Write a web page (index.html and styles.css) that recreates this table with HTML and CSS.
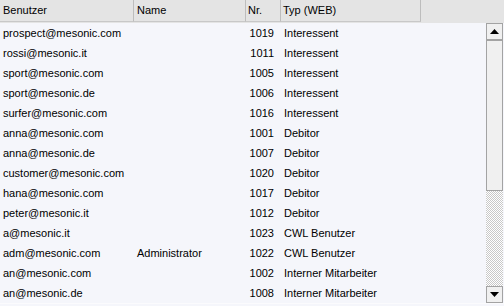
FILE: index.html
```html
<!DOCTYPE html>
<html lang="de">
<head>
    <meta charset="UTF-8">
    <title>Benutzer</title>
    <link rel="stylesheet" href="styles.css">
</head>
<body>
    <div class="grid">
        <div class="grid-head">
            <div class="head-cell col-user">Benutzer</div>
            <div class="head-cell col-name">Name</div>
            <div class="head-cell col-nr">Nr.</div>
            <div class="head-cell col-type">Typ (WEB)</div>
        </div>

        <div class="grid-body">
            <div class="rows">
                <div class="row"><span class="col-user">prospect@mesonic.com</span><span class="col-name"></span><span class="col-nr">1019</span><span class="col-type">Interessent</span></div>
                <div class="row"><span class="col-user">rossi@mesonic.it</span><span class="col-name"></span><span class="col-nr">1011</span><span class="col-type">Interessent</span></div>
                <div class="row"><span class="col-user">sport@mesonic.com</span><span class="col-name"></span><span class="col-nr">1005</span><span class="col-type">Interessent</span></div>
                <div class="row"><span class="col-user">sport@mesonic.de</span><span class="col-name"></span><span class="col-nr">1006</span><span class="col-type">Interessent</span></div>
                <div class="row"><span class="col-user">surfer@mesonic.com</span><span class="col-name"></span><span class="col-nr">1016</span><span class="col-type">Interessent</span></div>
                <div class="row"><span class="col-user">anna@mesonic.com</span><span class="col-name"></span><span class="col-nr">1001</span><span class="col-type">Debitor</span></div>
                <div class="row"><span class="col-user">anna@mesonic.de</span><span class="col-name"></span><span class="col-nr">1007</span><span class="col-type">Debitor</span></div>
                <div class="row"><span class="col-user">customer@mesonic.com</span><span class="col-name"></span><span class="col-nr">1020</span><span class="col-type">Debitor</span></div>
                <div class="row"><span class="col-user">hana@mesonic.com</span><span class="col-name"></span><span class="col-nr">1017</span><span class="col-type">Debitor</span></div>
                <div class="row"><span class="col-user">peter@mesonic.it</span><span class="col-name"></span><span class="col-nr">1012</span><span class="col-type">Debitor</span></div>
                <div class="row"><span class="col-user">a@mesonic.it</span><span class="col-name"></span><span class="col-nr">1023</span><span class="col-type">CWL Benutzer</span></div>
                <div class="row"><span class="col-user">adm@mesonic.com</span><span class="col-name">Administrator</span><span class="col-nr">1022</span><span class="col-type">CWL Benutzer</span></div>
                <div class="row"><span class="col-user">an@mesonic.com</span><span class="col-name"></span><span class="col-nr">1002</span><span class="col-type">Interner Mitarbeiter</span></div>
                <div class="row"><span class="col-user">an@mesonic.de</span><span class="col-name"></span><span class="col-nr">1008</span><span class="col-type">Interner Mitarbeiter</span></div>
            </div>

            <div class="scrollbar">
                <div class="scroll-btn">
                    <svg width="9" height="5" viewBox="0 0 9 5"><path d="M0 5 L4.5 0 L9 5 Z" fill="#000"/></svg>
                </div>
                <div class="scroll-thumb"></div>
                <div class="scroll-track"></div>
                <div class="scroll-btn">
                    <svg width="9" height="5" viewBox="0 0 9 5"><path d="M0 0 L9 0 L4.5 5 Z" fill="#000"/></svg>
                </div>
            </div>
        </div>
    </div>
</body>
</html>
```

FILE: styles.css
```css
* {
    margin: 0;
    padding: 0;
    box-sizing: border-box;
}

body {
    font-family: "Liberation Sans", Arial, sans-serif;
    font-size: 11px;
    color: #000;
    background: #f5f6fb;
    width: 504px;
    height: 306px;
    overflow: hidden;
}

.grid {
    display: flex;
    flex-direction: column;
    height: 306px;
}

.grid-head {
    display: flex;
    height: 23px;
    background: #e4e4e4;
    flex-shrink: 0;
}

.head-cell {
    height: 22px;
    line-height: 21px;
    border-right: 1px solid #bdbdbd;
    border-bottom: 1px solid #c8c8c8;
    white-space: nowrap;
}

.col-user {
    width: 134px;
    padding-left: 3px;
}

.col-name {
    width: 112px;
    padding-left: 3px;
}

.col-nr {
    width: 35px;
    padding-left: 2px;
}

.col-type {
    width: 140px;
    padding-left: 2px;
}

.grid-body {
    display: flex;
    height: 281px;
    border-bottom: 1px solid #fbfbfd;
}

.rows {
    flex: 1;
}

.row {
    display: flex;
    height: 20px;
    line-height: 20px;
    white-space: nowrap;
}

.row .col-nr {
    text-align: right;
    padding-right: 7px;
}

.row .col-type {
    padding-left: 3px;
}

.scrollbar {
    width: 17px;
    margin-right: 1px;
    display: flex;
    flex-direction: column;
}

.scroll-btn {
    height: 17px;
    background: #f0f0f0;
    border: 1px solid #a3a3a3;
    display: flex;
    align-items: center;
    justify-content: center;
    flex-shrink: 0;
}

.scroll-thumb {
    height: 151px;
    background: #f0f0f0;
    border: 1px solid #a3a3a3;
    flex-shrink: 0;
}

.scroll-track {
    flex: 1;
    background-color: #fff;
    background-image: repeating-conic-gradient(#c8c8c8 0 25%, #ffffff 0 50%);
    background-size: 2px 2px;
}
```
